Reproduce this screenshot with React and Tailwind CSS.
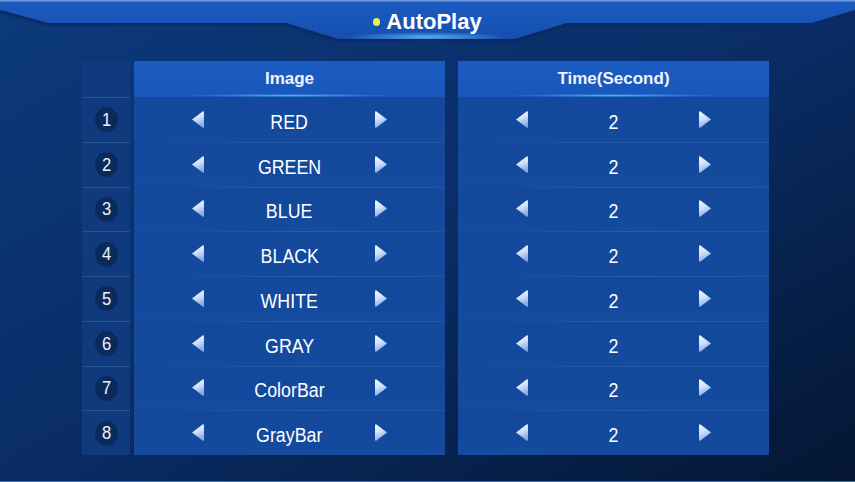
import React from 'react';

const rows = [
  { n: 1, image: 'RED', time: 2 },
  { n: 2, image: 'GREEN', time: 2 },
  { n: 3, image: 'BLUE', time: 2 },
  { n: 4, image: 'BLACK', time: 2 },
  { n: 5, image: 'WHITE', time: 2 },
  { n: 6, image: 'GRAY', time: 2 },
  { n: 7, image: 'ColorBar', time: 2 },
  { n: 8, image: 'GrayBar', time: 2 },
];

const Arrow = ({ dir }) => (
  <svg width="14" height="19" viewBox="0 0 14 19">
    <defs>
      <linearGradient id={`ar-${dir}`} x1="0" y1="0" x2="0.3" y2="1">
        <stop offset="0" stopColor="#f6f9ff" />
        <stop offset="0.5" stopColor="#d3e2fb" />
        <stop offset="1" stopColor="#86abe6" />
      </linearGradient>
    </defs>
    {dir === 'left' ? (
      <path d="M1 9.5 L11.5 1.5 Q13 0.8 13 2.5 L13 16.5 Q13 18.2 11.5 17.5 Z" fill={`url(#ar-${dir})`} />
    ) : (
      <path d="M13 9.5 L2.5 1.5 Q1 0.8 1 2.5 L1 16.5 Q1 18.2 2.5 17.5 Z" fill={`url(#ar-${dir})`} />
    )}
  </svg>
);

const Header = () => (
  <div className="relative h-[44px] flex items-start justify-center">
    <svg className="absolute inset-0" width="855" height="44" viewBox="0 0 855 44">
      <defs>
        <linearGradient id="band" x1="0" y1="0" x2="0" y2="1">
          <stop offset="0" stopColor="#1b5bc2" />
          <stop offset="1" stopColor="#154fae" />
        </linearGradient>
        <radialGradient id="glow" cx="0.5" cy="0.5" r="0.5">
          <stop offset="0" stopColor="#5fb8ff" stopOpacity="0.9" />
          <stop offset="1" stopColor="#5fb8ff" stopOpacity="0" />
        </radialGradient>
      </defs>
      <polygon points="0,0 855,0 855,11 812,24 567,24 515,40 338,40 286,24 48,24 0,11" fill="url(#band)" />
      <ellipse cx="427" cy="37" rx="80" ry="5" fill="url(#glow)" />
      <polyline points="0,11 48,24 286,24 338,40 515,40 567,24 812,24 855,11" fill="none" stroke="#0a2a66" strokeWidth="2" />
      <polyline points="0,13 48,26 286,26 338,42 515,42 567,26 812,26 855,13" fill="none" stroke="#0a2a66" strokeOpacity="0.4" strokeWidth="2" />
      <rect x="0" y="0" width="855" height="1.5" fill="#6e98d8" />
    </svg>
    <div className="relative flex items-center gap-[6px] mt-[9px]">
      <span className="w-[7px] h-[8px] rounded-full bg-[#e6ef4a]" />
      <span className="text-white font-bold text-[22px] leading-[26px]">AutoPlay</span>
    </div>
  </div>
);

const Separator = () => (
  <div className="absolute left-[8%] right-0 top-0 h-px bg-gradient-to-r from-transparent via-[#2b5ea9] to-[#24549c]" />
);

const ValueColumn = ({ title, values }) => (
  <div className="w-[311px] flex flex-col">
    <div className="relative h-[36px] bg-gradient-to-b from-[#1b5cc2] to-[#1957bb] flex items-center justify-center">
      <span className="text-[#eef4ff] font-bold text-[17px]">{title}</span>
      <div className="absolute bottom-0 left-[15%] right-[15%] h-[3px] rounded-full bg-[radial-gradient(ellipse_at_center,_#4fb0ff_0%,_rgba(79,176,255,0)_70%)]" />
    </div>
    {values.map((v, i) => (
      <div
        key={i}
        className="relative h-[44.75px] bg-gradient-to-b from-[#13489b] to-[#144b9e] flex items-center justify-between px-[57px]"
      >
        {i > 0 && <Separator />}
        <Arrow dir="left" />
        <span className="text-white text-[20px] leading-none mt-[5px] scale-x-[0.89] whitespace-nowrap">{v}</span>
        <Arrow dir="right" />
      </div>
    ))}
  </div>
);

export default function App() {
  return (
    <div
      className="relative w-[855px] h-[482px] overflow-hidden bg-gradient-to-br from-[#0c3a7c] via-[#0a2d66] to-[#041633]"
      style={{ fontFamily: '"Liberation Sans", Arial, sans-serif' }}
    >
      <Header />
      <div className="flex ml-[82px] mt-[17px]">
        <div className="w-[48px] flex flex-col bg-[#0f3a7e]">
          <div className="h-[36px]" />
          {rows.map((r) => (
            <div key={r.n} className="h-[44.75px] border-t border-[#26528f] flex items-center justify-center">
              <span className="w-[25px] h-[25px] rounded-full bg-[#0b2a5c] flex items-center justify-center text-[#eef3fb] text-[18px] leading-none scale-x-[0.92]">
                {r.n}
              </span>
            </div>
          ))}
        </div>
        <div className="w-[4px]" />
        <ValueColumn title="Image" values={rows.map((r) => r.image)} />
        <div className="w-[13px]" />
        <ValueColumn title="Time(Second)" values={rows.map((r) => r.time)} />
      </div>
      <div className="absolute bottom-0 left-0 right-0 h-[1.5px] bg-[#3c6cb2]" />
    </div>
  );
}
